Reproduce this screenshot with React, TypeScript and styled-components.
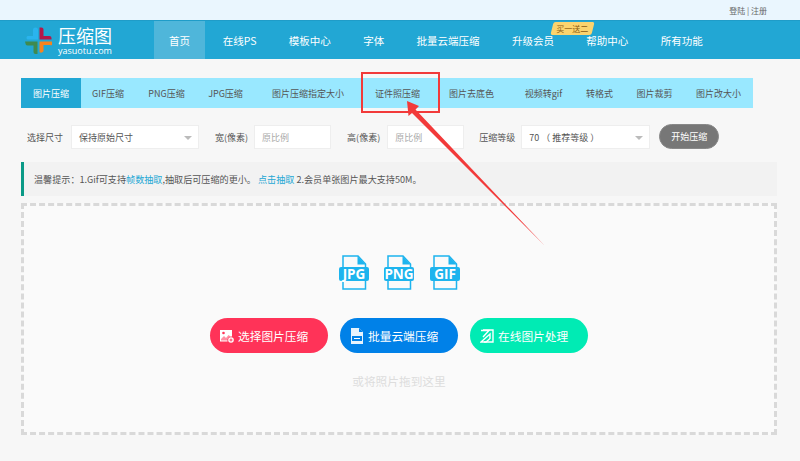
import React from 'react'
import styled, { createGlobalStyle } from 'styled-components'

const cjk = '"Noto Sans CJK SC", "Open Sans", sans-serif'

const GlobalStyle = createGlobalStyle`
  html, body {
    margin: 0;
    padding: 0;
    background: #f7f7f7;
    font-family: ${cjk};
  }
  * {
    box-sizing: border-box;
  }
`
const Page = styled.div`
  position: relative;
  width: 800px;
  height: 461px;
  overflow: hidden;
`
const TopBar = styled.div`
  height: 20px;
  background: #eaf6fe;
  display: flex;
  justify-content: flex-end;
  align-items: center;
  padding-right: 33px;
  font-size: 8px;
  color: #666;
`
const Header = styled.header`
  height: 39px;
  background: #22a7d4;
  border-top: 1px solid #1f9cc8;
  display: flex;
  padding-left: 25px;
`
const Logo = styled.div`
  width: 129px;
  display: flex;
  align-items: center;
  gap: 6px;
  color: #fff;
`
const LogoText = styled.div`
  display: flex;
  flex-direction: column;
`
const LogoName = styled.span`
  font-size: 18px;
  line-height: 21px;
`
const LogoDomain = styled.span`
  font-family: "Open Sans", sans-serif;
  font-size: 9px;
  line-height: 9px;
`
const Nav = styled.nav`
  display: flex;
`
const NavItem = styled.a<{ $active?: boolean }>`
  position: relative;
  padding: 0 ${p => (p.$active ? 15 : 16.2)}px;
  margin-right: ${p => (p.$active ? 1.5 : 0)}px;
  display: flex;
  align-items: center;
  font-size: 10.5px;
  color: #fff;
  background: ${p => (p.$active ? '#4fb6da' : 'transparent')};
`
const Badge = styled.span`
  position: absolute;
  left: 56px;
  top: 1px;
  width: 41px;
  height: 13px;
  isolation: isolate;
  display: flex;
  align-items: center;
  justify-content: center;
  font-size: 8px;
  color: #8a5a10;
  white-space: nowrap;
  &::before {
    content: '';
    position: absolute;
    inset: 0;
    z-index: -1;
    background: #fbd46e;
    border-radius: 2px;
    transform: skewX(-14deg);
  }
`
const Main = styled.main`
  padding: 19px 23px 0 21px;
`
const Tabs = styled.div`
  width: 732px;
  height: 30px;
  background: #99e8ff;
  display: flex;
`
const Tab = styled.a<{ $active?: boolean; $w: number }>`
  width: ${p => p.$w}px;
  display: flex;
  align-items: center;
  justify-content: center;
  font-size: 9px;
  white-space: nowrap;
  color: ${p => (p.$active ? '#fff' : '#555')};
  background: ${p => (p.$active ? '#22a7d4' : 'transparent')};
`
const Controls = styled.div`
  display: flex;
  align-items: center;
  height: 24px;
  margin-top: 17px;
`
const Label = styled.span<{ $left: number; $right: number }>`
  margin-left: ${p => p.$left}px;
  margin-right: ${p => p.$right}px;
  font-size: 9px;
  color: #555;
  white-space: nowrap;
`
const Field = styled.div<{ $w: number }>`
  position: relative;
  width: ${p => p.$w}px;
  height: 24px;
  background: #fff;
  border: 1px solid #eee;
  padding-left: 7px;
  display: flex;
  align-items: center;
  font-size: 9px;
  color: #555;
  white-space: pre;
`
const Placeholder = styled.span`
  color: #aaa;
`
const Caret = styled.i`
  position: absolute;
  right: 6px;
  top: 10px;
  border-left: 4px solid transparent;
  border-right: 4px solid transparent;
  border-top: 4px solid #bbb;
`
const StartButton = styled.button`
  width: 60px;
  height: 25px;
  margin: -2px 0 0 9px;
  padding: 0;
  border: 1px solid #888;
  border-radius: 12.5px;
  background: #777;
  color: #fff;
  font-family: inherit;
  font-size: 9px;
`
const Notice = styled.div`
  width: 756px;
  height: 34px;
  margin-top: 13px;
  padding-left: 10px;
  background: #f2f2f2;
  border-left: 3px solid #0a9a87;
  display: flex;
  align-items: center;
  font-size: 9.1px;
  color: #555;
  white-space: pre;
`
const NoticeLink = styled.a`
  color: #22a7d4;
`
const Drop = styled.div`
  width: 756px;
  height: 232px;
  margin-top: 7px;
  background: #fafafa;
  border: 3px dashed #d9d9d9;
  display: flex;
  flex-direction: column;
  align-items: center;
  padding-top: 49px;
`
const FileRow = styled.div`
  display: flex;
  gap: 15.5px;
  height: 35px;
`
const Actions = styled.div`
  display: flex;
  gap: 12px;
  margin-top: 28px;
`
const Action = styled.a<{ $bg: string }>`
  width: 118px;
  height: 35px;
  border-radius: 18px;
  background: ${p => p.$bg};
  color: #fff;
  display: flex;
  align-items: center;
  padding-left: 10px;
  gap: 4px;
  font-size: 11.7px;
  white-space: nowrap;
`
const DropHint = styled.div`
  margin-top: 19px;
  font-size: 11.7px;
  line-height: 18px;
  color: #ddd;
`
const RedBox = styled.div`
  position: absolute;
  left: 361px;
  top: 72px;
  width: 79px;
  height: 41px;
  border: 2px solid #f23a3a;
`
const ArrowLayer = styled.svg`
  position: absolute;
  left: 0;
  top: 0;
  pointer-events: none;
`

const LogoMark = () => (
  <svg width="27" height="27" viewBox="0 0 27 27">
    <path d="M8 9V3a2.500 2.500 0 0 1 5 0v9.500H2.500a2 2 0 0 1 0-3.500z" fill="#2ab4ee" />
    <path d="M14.500 .5h2a2 2 0 0 1 2 2V9h6a2 2 0 0 1 2 2v1.500H14.500z" fill="#b3184a" />
    <path d="M0 14.500h12.500V27h-2a2 2 0 0 1-2-2v-6.500h-6a2 2 0 0 1-2-2z" fill="#3f8a4f" />
    <path d="M14.500 14.500H27a2 2 0 0 1-2 3.500h-6.500v6a2.500 2.500 0 0 1-4 1z" fill="#f6841f" />
  </svg>
)

const FileIcon = ({ label }: { label: string }) => (
  <svg width="30" height="35" viewBox="0 0 30 35">
    <path d="M4 1h15l7.500 8v25H4z" fill="#fafafa" stroke="#1db4ee" strokeWidth="1.500" />
    <path d="M18.500 1l8 8.500h-8z" fill="#1db4ee" />
    <rect x="0" y="12" width="30" height="14" rx="2" fill="#1db4ee" />
    <text
      x="15"
      y="24"
      textAnchor="middle"
      fontFamily='"Open Sans", sans-serif'
      fontWeight="700"
      fontSize="13.5"
      fill="#fff"
    >
      {label}
    </text>
  </svg>
)

const PhotoIcon = () => (
  <svg width="14" height="14" viewBox="0 0 14 14">
    <path d="M0 1h12v6.500a4 4 0 0 0-4.500 5H0z" fill="#fff" />
    <circle cx="3.500" cy="4" r="1.300" fill="#ff3358" />
    <path d="M1 10l3-3 2 2 2.500-3 2 1.500-3 4H1z" fill="#ff3358" opacity="0.55" />
    <circle cx="11" cy="11" r="2.800" fill="#fff" />
    <path d="M9.500 11h3M11 9.500v3" stroke="#ff3358" strokeWidth="0.900" />
  </svg>
)

const ZipIcon = () => (
  <svg width="14" height="16" viewBox="0 0 14 16">
    <path d="M1 0h8l4 4v12H1z" fill="#fff" opacity="0.9" />
    <path d="M9 0v4h4z" fill="#0081e8" />
    <rect x="2" y="8" width="10" height="5" fill="#0081e8" />
    <path d="M4 10.500h6" stroke="#fff" strokeWidth="1" />
  </svg>
)

const EditIcon = () => (
  <svg width="14" height="14" viewBox="0 0 14 14" fill="none" stroke="#fff" strokeWidth="1.400">
    <path d="M3 1h10v12H4" />
    <path d="M1 1.500h8L3 8" />
    <path d="M1 13l9-8v4.500L6 13z" />
  </svg>
)

const tabs: [string, number][] = [
  ['图片压缩', 60],
  ['GIF压缩', 54],
  ['PNG压缩', 63],
  ['JPG压缩', 55],
  ['图片压缩指定大小', 110],
  ['证件照压缩', 69],
  ['图片去底色', 79],
  ['视频转gif', 65],
  ['转格式', 47],
  ['图片裁剪', 63],
  ['图片改大小', 65]
]

const navItems = ['在线PS', '模板中心', '字体', '批量云端压缩']

const App: React.FC = () => (
  <Page>
    <GlobalStyle />
    <TopBar>登陆 | 注册</TopBar>
    <Header>
      <Logo>
        <LogoMark />
        <LogoText>
          <LogoName>压缩图</LogoName>
          <LogoDomain>yasuotu.com</LogoDomain>
        </LogoText>
      </Logo>
      <Nav>
        <NavItem $active>首页</NavItem>
        {navItems.map(item => (
          <NavItem key={item}>{item}</NavItem>
        ))}
        <NavItem>
          升级会员
          <Badge>买一送二</Badge>
        </NavItem>
        <NavItem>帮助中心</NavItem>
        <NavItem>所有功能</NavItem>
      </Nav>
    </Header>
    <Main>
      <Tabs>
        {tabs.map(([name, w], i) => (
          <Tab key={name} $w={w} $active={i === 0}>
            {name}
          </Tab>
        ))}
      </Tabs>
      <Controls>
        <Label $left={6} $right={8}>选择尺寸</Label>
        <Field $w={128}>
          保持原始尺寸
          <Caret />
        </Field>
        <Label $left={16} $right={6}>宽(像素)</Label>
        <Field $w={77}>
          <Placeholder>原比例</Placeholder>
        </Field>
        <Label $left={16} $right={7}>高(像素)</Label>
        <Field $w={77}>
          <Placeholder>原比例</Placeholder>
        </Field>
        <Label $left={15} $right={6}>压缩等级</Label>
        <Field $w={129}>
          70 （ 推荐等级 ）
          <Caret />
        </Field>
        <StartButton>开始压缩</StartButton>
      </Controls>
      <Notice>
        温馨提示：1.Gif可支持<NoticeLink>帧数抽取</NoticeLink>,抽取后可压缩的更小。 <NoticeLink>点击抽取</NoticeLink> 2.会员单张图片最大支持50M。
      </Notice>
      <Drop>
        <FileRow>
          <FileIcon label="JPG" />
          <FileIcon label="PNG" />
          <FileIcon label="GIF" />
        </FileRow>
        <Actions>
          <Action $bg="#ff3358">
            <PhotoIcon />
            选择图片压缩
          </Action>
          <Action $bg="#0081e8">
            <ZipIcon />
            批量云端压缩
          </Action>
          <Action $bg="#00ebb4">
            <EditIcon />
            在线图片处理
          </Action>
        </Actions>
        <DropHint>或将照片拖到这里</DropHint>
      </Drop>
    </Main>
    <RedBox />
    <ArrowLayer width="800" height="461" viewBox="0 0 800 461">
      <path d="M407 101L419 106 415.500 109.500 544.500 245.500 412 113 408.500 116z" fill="#f23a3a" />
    </ArrowLayer>
  </Page>
)

export default App
